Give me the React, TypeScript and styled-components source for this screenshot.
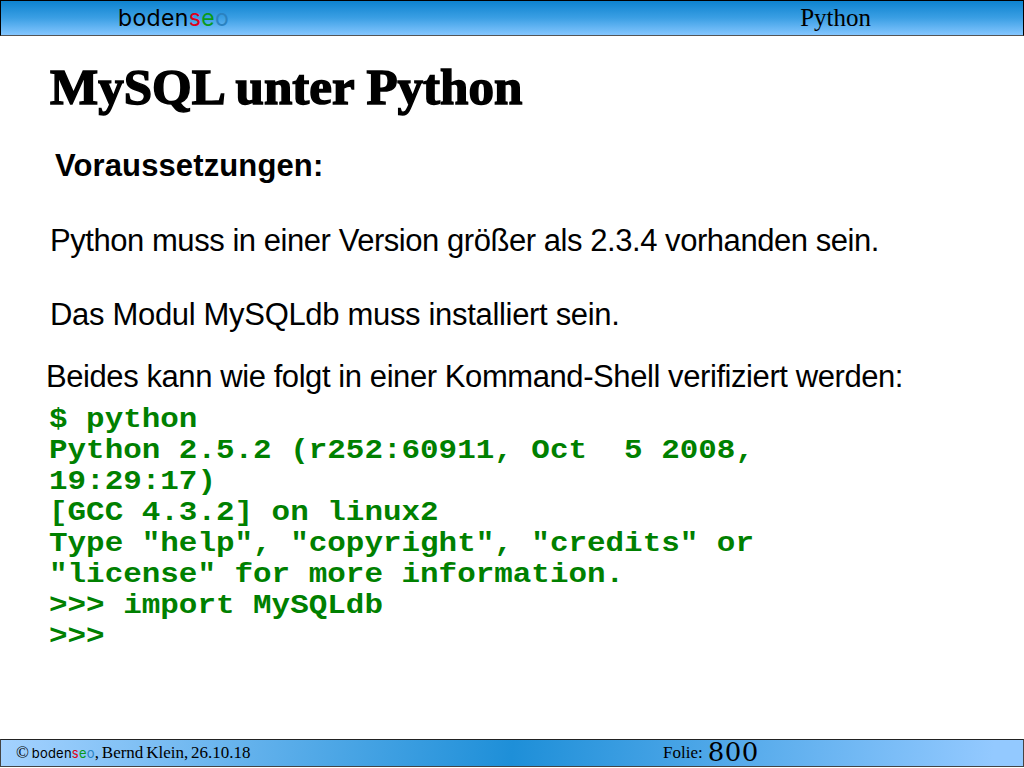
import React from "react";
import styled, { createGlobalStyle } from "styled-components";

const GlobalStyle = createGlobalStyle`
  html, body {
    margin: 0;
    padding: 0;
    background: #fff;
  }
`;

const Page = styled.div`
  width: 1024px;
  height: 768px;
  display: flex;
  flex-direction: column;
  overflow: hidden;
`;

const TopBar = styled.header`
  box-sizing: border-box;
  height: 36px;
  display: flex;
  align-items: center;
  padding-left: 117px;
  padding-right: 152px;
  justify-content: space-between;
  border-top: 1px solid #000;
  border-left: 1px solid #000;
  border-right: 1px solid #000;
  border-bottom: 1px solid #555;
  background: linear-gradient(180deg, #0d83cf 0%, #3b9fe4 50%, #84c6ff 100%);
`;

const Logo = styled.span<{ $size: number }>`
  font-family: "Inter", "Noto Sans", sans-serif;
  font-weight: 400;
  font-size: ${(p) => p.$size}px;
  letter-spacing: 0.016em;
  color: #000;
`;

const LogoPart = styled.span<{ $color: string }>`
  color: ${(p) => p.$color};
`;

const TopTitle = styled.span`
  font-family: "Liberation Serif", serif;
  font-size: 25px;
  color: #000;
`;

const Content = styled.main`
  flex: 1;
  padding: 23px 0 0 50px;
`;

const Title = styled.h1`
  margin: 0 0 33px;
  font-family: "Liberation Serif", serif;
  font-weight: 700;
  font-size: 51px;
  line-height: 56px;
  -webkit-text-stroke: 1.5px #000;
  color: #000;
`;

const SubHead = styled.h2`
  margin: 0 0 38px 5px;
  font-family: "Liberation Sans", Arial, sans-serif;
  font-weight: 700;
  font-size: 31px;
  line-height: 36px;
  letter-spacing: 0.12px;
`;

const Para = styled.p<{ $shift?: number; $after: number; $spacing: number }>`
  margin: 0 0 ${(p) => p.$after}px ${(p) => p.$shift ?? 0}px;
  font-family: "Liberation Sans", Arial, sans-serif;
  font-size: 31px;
  line-height: 37px;
  letter-spacing: ${(p) => p.$spacing}px;
  color: #000;
`;

const Code = styled.pre`
  margin: 0 0 0 -1px;
  font-family: "Liberation Mono", monospace;
  font-weight: 700;
  font-size: 27px;
  line-height: 31px;
  color: #008000;
  transform: scaleX(1.145);
  transform-origin: left top;
`;

const BottomBar = styled.footer`
  box-sizing: border-box;
  height: 28px;
  margin-bottom: 1px;
  padding-left: 15px;
  display: flex;
  align-items: center;
  border: 1px solid #444;
  border-top-color: #222;
  background: linear-gradient(95deg, #a4d2ff 0%, #1e8fd8 50%, #93c9ff 97%);
`;

const Credit = styled.span`
  width: 647px;
  font-family: "Liberation Serif", serif;
  font-size: 17px;
  word-spacing: -1.4px;
  color: #000;
`;

const SlideLabel = styled.span`
  font-family: "Liberation Serif", serif;
  font-size: 17px;
  margin-right: 5px;
`;

const SlideNumber = styled.span`
  font-family: "DejaVu Serif", serif;
  font-size: 26px;
  line-height: 24px;
  letter-spacing: 0.5px;
  margin-top: -3px;
`;

const BrandName: React.FC<{ size: number }> = ({ size }) => (
  <Logo $size={size}>
    boden
    <LogoPart $color="#e0001a">s</LogoPart>
    <LogoPart $color="#0a9a1a">e</LogoPart>
    <LogoPart $color="#2a82c0">o</LogoPart>
  </Logo>
);

const App: React.FC = () => {
  return (
    <Page>
      <GlobalStyle />
      <TopBar>
        <BrandName size={23} />
        <TopTitle>Python</TopTitle>
      </TopBar>
      <Content>
        <Title>MySQL unter Python</Title>
        <SubHead>Voraussetzungen:</SubHead>
        <Para $after={37} $spacing={-0.45}>
          Python muss in einer Version größer als 2.3.4 vorhanden sein.
        </Para>
        <Para $after={25} $spacing={-0.32}>
          Das Modul MySQLdb muss installiert sein.
        </Para>
        <Para $shift={-4} $after={10} $spacing={-0.42}>
          Beides kann wie folgt in einer Kommand-Shell verifiziert werden:
        </Para>
        <Code>{`$ python
Python 2.5.2 (r252:60911, Oct  5 2008,
19:29:17)
[GCC 4.3.2] on linux2
Type "help", "copyright", "credits" or
"license" for more information.
>>> import MySQLdb
>>>`}</Code>
      </Content>
      <BottomBar>
        <Credit>
          © <BrandName size={13} />, Bernd Klein, 26.10.18
        </Credit>
        <SlideLabel>Folie:</SlideLabel>
        <SlideNumber>800</SlideNumber>
      </BottomBar>
    </Page>
  );
};

export default App;
